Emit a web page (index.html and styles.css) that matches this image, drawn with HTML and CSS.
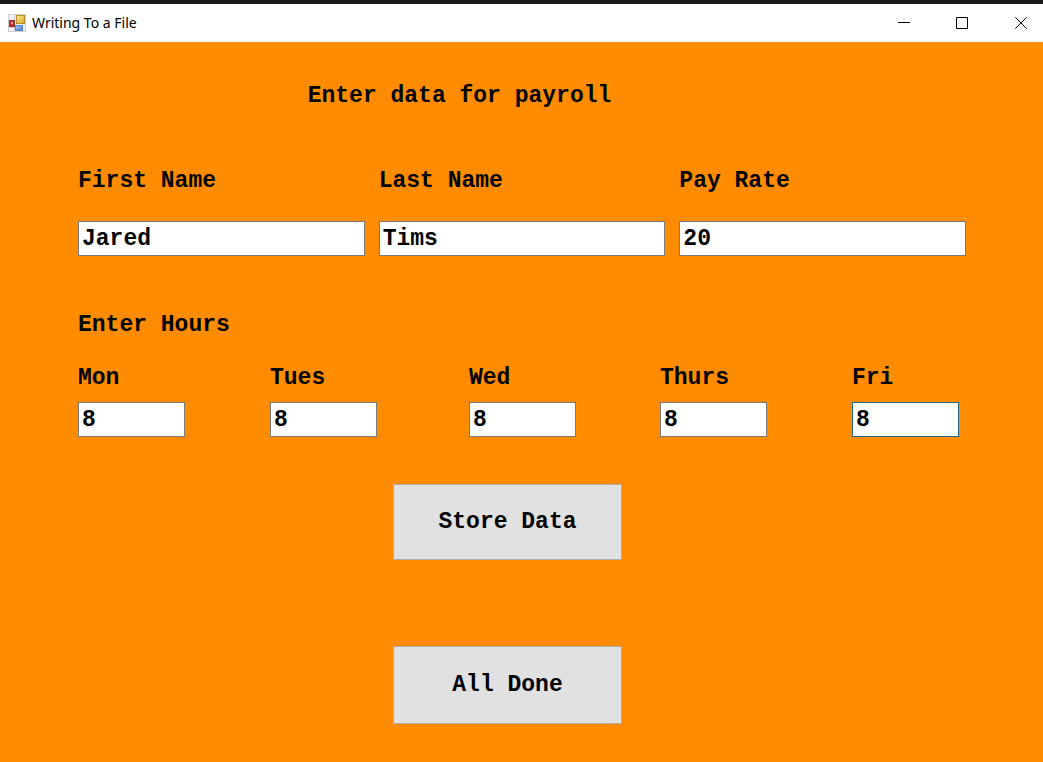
FILE: index.html
```
<!DOCTYPE html>
<html lang="en">
<head>
<meta charset="utf-8">
<title>Writing To a File</title>
<link rel="stylesheet" href="styles.css">
</head>
<body>
<header class="titlebar">
  <svg class="app-icon" viewBox="0 0 18 18" aria-hidden="true">
    <defs>
      <linearGradient id="gold" x2="1" y2="1"><stop stop-color="#fbe89a"/><stop offset="1" stop-color="#dfa51c"/></linearGradient>
      <linearGradient id="blue" x2="1" y2="1"><stop stop-color="#a9c9f8"/><stop offset="1" stop-color="#3f74cc"/></linearGradient>
    </defs>
    <rect x=".5" y=".5" width="17" height="17" fill="#f1f1f3" stroke="#d0ced2"/>
    <path d="M6.500 1v16M1 6.500h6M1 13.500h6" stroke="#d0ced2" fill="none"/>
    <rect x="1.500" y="6.500" width="5" height="6" fill="#c0392f" stroke="#9c2f2a"/>
    <rect x="3" y="8" width="2" height="2" fill="#e79c90"/>
    <rect x="8.500" y="1.500" width="8" height="8" fill="url(#gold)" stroke="#b98c2c"/>
    <rect x="7.500" y="11.500" width="7" height="5" fill="url(#blue)" stroke="#5c86cf"/>
  </svg>
  <h1 class="title">Writing To a File</h1>
  <div class="window-controls">
    <button class="window-button" type="button" aria-label="Minimize"><svg class="glyph" viewBox="0 0 12 12"><path d="M0 5.500h12"/></svg></button>
    <button class="window-button" type="button" aria-label="Maximize"><svg class="glyph" viewBox="0 0 12 12"><path d="M.5.5h11v11H.5z"/></svg></button>
    <button class="window-button" type="button" aria-label="Close"><svg class="glyph" viewBox="0 0 12 12"><path d="M.3.3l11.400 11.400M11.700.3L.3 11.700"/></svg></button>
  </div>
</header>
<main class="client">
  <form class="payroll">
    <h2 class="heading">Enter data for payroll</h2>
    <div class="employee">
      <div class="field"><label for="first">First Name</label><input id="first" class="box" type="text" value="Jared"></div>
      <div class="field"><label for="last">Last Name</label><input id="last" class="box" type="text" value="Tims"></div>
      <div class="field"><label for="rate">Pay Rate</label><input id="rate" class="box" type="text" value="20"></div>
    </div>
    <fieldset class="hours">
      <legend class="legend">Enter Hours</legend>
      <div class="days">
        <div class="day"><label for="mon">Mon</label><input id="mon" class="box" type="text" value="8"></div>
        <div class="day"><label for="tue">Tues</label><input id="tue" class="box" type="text" value="8"></div>
        <div class="day"><label for="wed">Wed</label><input id="wed" class="box" type="text" value="8"></div>
        <div class="day"><label for="thu">Thurs</label><input id="thu" class="box" type="text" value="8"></div>
        <div class="day"><label for="fri">Fri</label><input id="fri" class="box box-active" type="text" value="8"></div>
      </div>
    </fieldset>
    <div class="actions">
      <button class="action" type="button">Store Data</button>
      <button class="action action-done" type="button">All Done</button>
    </div>
  </form>
</main>
</body>
</html>
```
FILE: styles.css
```
* { box-sizing: border-box; }
body {
  margin: 0;
  min-height: 100vh;
  display: flex;
  flex-direction: column;
  background: #ff8c00;
  color: #000;
}
.titlebar {
  display: flex;
  align-items: center;
  height: 42px;
  padding-left: 8px;
  border-top: 4px solid #1b1a1c;
  background: #fff;
}
.app-icon { width: 18px; height: 18px; margin-right: 6px; }
.title {
  margin: 0;
  font: 400 14px/20px "Noto Sans", "Open Sans", sans-serif;
}
.window-controls { display: flex; gap: 12px; margin-left: auto; }
.window-button {
  display: grid;
  place-items: center;
  width: 46px;
  height: 38px;
  padding: 0;
  border: 0;
  background: none;
}
.window-button:last-child { width: 44px; margin-left: 2px; }
.glyph { width: 12px; height: 12px; fill: none; stroke: #000; }
.client {
  flex: 1;
  padding: 41px 77px 37px 78px;
  font: 700 23px/26px "Liberation Mono", "Courier New", monospace;
}
.heading {
  margin: 0 0 59px;
  padding-right: 125px;
  font: inherit;
  text-align: center;
}
.employee {
  display: grid;
  grid-template-columns: repeat(3, 1fr);
  gap: 14px;
  margin-bottom: 56px;
}
.field { display: flex; flex-direction: column; gap: 27px; }
.box {
  width: 100%;
  height: 35px;
  padding: 0 3px;
  border: 1px solid #7a7a7a;
  border-radius: 0;
  background: #fff;
  color: #000;
  font: inherit;
}
.box-active { border-color: #20688f; }
.hours { margin: 0; padding: 0; border: 0; min-width: 0; }
.legend { padding: 0; margin-bottom: 27px; }
.days {
  display: grid;
  grid-template-columns: 192fr 199fr 191fr 192fr 107fr;
  padding-right: 7px;
}
.day { display: flex; flex-direction: column; gap: 11px; }
.day .box { width: 107px; }
.actions {
  display: flex;
  flex-direction: column;
  align-items: center;
  gap: 86px;
  margin-top: 47px;
  padding-right: 29px;
}
.action {
  width: 229px;
  padding: 24px 0;
  border: 1px solid #adadad;
  border-radius: 0;
  background: #e1e1e1;
  color: #000;
  font: inherit;
}
.action-done { padding: 25px 0; }
```
